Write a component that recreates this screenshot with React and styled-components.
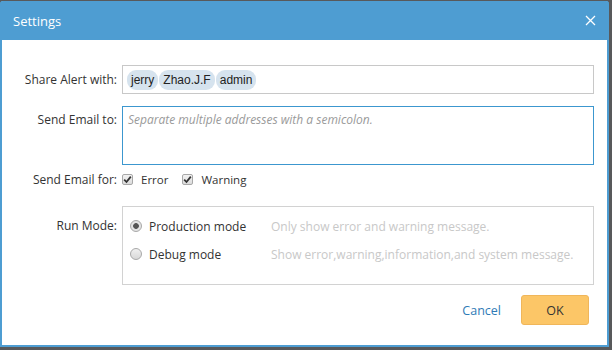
import styled, { createGlobalStyle } from "styled-components";

const GlobalStyle = createGlobalStyle`
  html, body {
    margin: 0;
    padding: 0;
    background: #58595b;
    font-family: "Open Sans", "DejaVu Sans", sans-serif;
  }
  * {
    box-sizing: border-box;
  }
`;

export default function App() {
  return (
    <>
      <GlobalStyle />
      <Page>
        <Dialog>
          <Header>
            <h1>Settings</h1>
            <CloseButton type="button" aria-label="close">
              <svg width="11" height="11" viewBox="0 0 11 11">
                <path d="M1 1 L10 10 M10 1 L1 10" stroke="#fff" strokeWidth="1.3" />
              </svg>
            </CloseButton>
          </Header>
          <Body>
            <Row $mt={25} $align="center">
              <Label>Share Alert with:</Label>
              <TagInput>
                <Tag>jerry</Tag>
                <Tag>Zhao.J.F</Tag>
                <Tag>admin</Tag>
              </TagInput>
            </Row>
            <Row $mt={12}>
              <Label $pt={5}>Send Email to:</Label>
              <TextArea placeholder="Separate multiple addresses with a semicolon." />
            </Row>
            <Row $mt={6} $align="center">
              <Label>Send Email for:</Label>
              <Checks>
                <Check>
                  <Box>
                    <svg width="9" height="9" viewBox="0 0 9 9">
                      <path d="M1.2 4.6 L3.5 7 L7.8 1.6" stroke="#333" strokeWidth="1.8" fill="none" />
                    </svg>
                  </Box>
                  Error
                </Check>
                <Check>
                  <Box>
                    <svg width="9" height="9" viewBox="0 0 9 9">
                      <path d="M1.2 4.6 L3.5 7 L7.8 1.6" stroke="#333" strokeWidth="1.8" fill="none" />
                    </svg>
                  </Box>
                  Warning
                </Check>
              </Checks>
            </Row>
            <Row $mt={18}>
              <Label $pt={11}>Run Mode:</Label>
              <ModeBox>
                <Mode>
                  <Radio $on />
                  <ModeName>Production mode</ModeName>
                  <ModeHint>Only show error and warning message.</ModeHint>
                </Mode>
                <Mode>
                  <Radio />
                  <ModeName>Debug mode</ModeName>
                  <ModeHint>Show error,warning,information,and system message.</ModeHint>
                </Mode>
              </ModeBox>
            </Row>
            <Footer>
              <CancelButton type="button">Cancel</CancelButton>
              <OkButton type="button">OK</OkButton>
            </Footer>
          </Body>
        </Dialog>
      </Page>
    </>
  );
}

const Page = styled.div`
  width: 612px;
  height: 350px;
  padding-top: 1px;
`;

const Dialog = styled.div`
  width: 609px;
  height: 346px;
  background: #fff;
  border: 2px solid #4e9dd2;
  border-top: none;
  border-radius: 3px 3px 0 0;
  display: flex;
  flex-direction: column;
`;

const Header = styled.div`
  height: 39px;
  background: #4e9dd2;
  display: flex;
  align-items: center;
  justify-content: space-between;
  padding: 0 13px 0 13px;
  margin: 0 -2px;
  border-radius: 3px 3px 0 0;
  h1 {
    margin: 0;
    font-size: 13px;
    font-weight: 400;
    color: #fff;
  }
`;

const CloseButton = styled.button`
  border: none;
  background: none;
  padding: 0;
  display: flex;
  cursor: pointer;
`;

const Body = styled.div`
  flex: 1;
  display: flex;
  flex-direction: column;
`;

const Row = styled.div`
  display: flex;
  align-items: ${(p) => (p.$align === "center" ? "center" : "flex-start")};
  margin-top: ${(p) => p.$mt}px;
`;

const Label = styled.div`
  width: 115px;
  margin-right: 5px;
  text-align: right;
  font-size: 12px;
  color: #333;
  padding-top: ${(p) => p.$pt || 0}px;
`;

const TagInput = styled.div`
  width: 472px;
  height: 29px;
  border: 1px solid #c8c8c8;
  display: flex;
  align-items: center;
  padding-left: 4px;
  gap: 1px;
`;

const Tag = styled.span`
  font-family: "Liberation Sans", Arial, sans-serif;
  font-size: 12px;
  color: #222;
  background: #d6e3ee;
  border-radius: 9px;
  padding: 3px 4px;
  line-height: 14px;
`;

const TextArea = styled.textarea`
  width: 472px;
  height: 59px;
  border: 1px solid #3c97cf;
  outline: none;
  resize: none;
  padding: 4px 5px;
  font-family: "Open Sans", sans-serif;
  font-size: 12px;
  &::placeholder {
    color: #9a9a9a;
    font-style: italic;
  }
`;

const Checks = styled.div`
  display: flex;
  gap: 14px;
  height: 16px;
  align-items: center;
`;

const Check = styled.label`
  display: flex;
  align-items: center;
  gap: 8px;
  font-size: 11.5px;
  color: #333;
`;

const Box = styled.span`
  width: 11px;
  height: 11px;
  border: 1px solid #a8a8a8;
  border-radius: 2px;
  background: linear-gradient(#f2f2f2, #dcdcdc);
  display: flex;
  align-items: center;
  justify-content: center;
`;

const ModeBox = styled.div`
  width: 472px;
  height: 79px;
  border: 1px solid #d2d2d2;
  padding: 5px 0 0 7px;
  display: flex;
  flex-direction: column;
`;

const Mode = styled.div`
  display: flex;
  align-items: center;
  height: 28px;
`;

const Radio = styled.span`
  width: 12px;
  height: 12px;
  border-radius: 50%;
  border: 1px solid #a8a8a8;
  background: ${(p) =>
    p.$on
      ? "radial-gradient(circle, #555 0 2.5px, #e4e4e4 3.2px)"
      : "linear-gradient(#f0f0f0, #d8d8d8)"};
  margin-right: 7px;
`;

const ModeName = styled.span`
  width: 122px;
  font-size: 12px;
  color: #333;
`;

const ModeHint = styled.span`
  font-size: 12px;
  color: #c8c8c8;
`;

const Footer = styled.div`
  display: flex;
  justify-content: flex-end;
  align-items: center;
  margin-top: 10px;
  padding-right: 18px;
  gap: 20px;
`;

const CancelButton = styled.button`
  border: none;
  background: none;
  padding: 0;
  font-family: "Open Sans", sans-serif;
  font-size: 12.5px;
  color: #2f7bb6;
  cursor: pointer;
`;

const OkButton = styled.button`
  width: 68px;
  height: 30px;
  background: #fcc667;
  border: 1px solid #f0b65a;
  border-radius: 3px;
  font-family: "Open Sans", sans-serif;
  font-size: 12.5px;
  color: #333;
  cursor: pointer;
`;
